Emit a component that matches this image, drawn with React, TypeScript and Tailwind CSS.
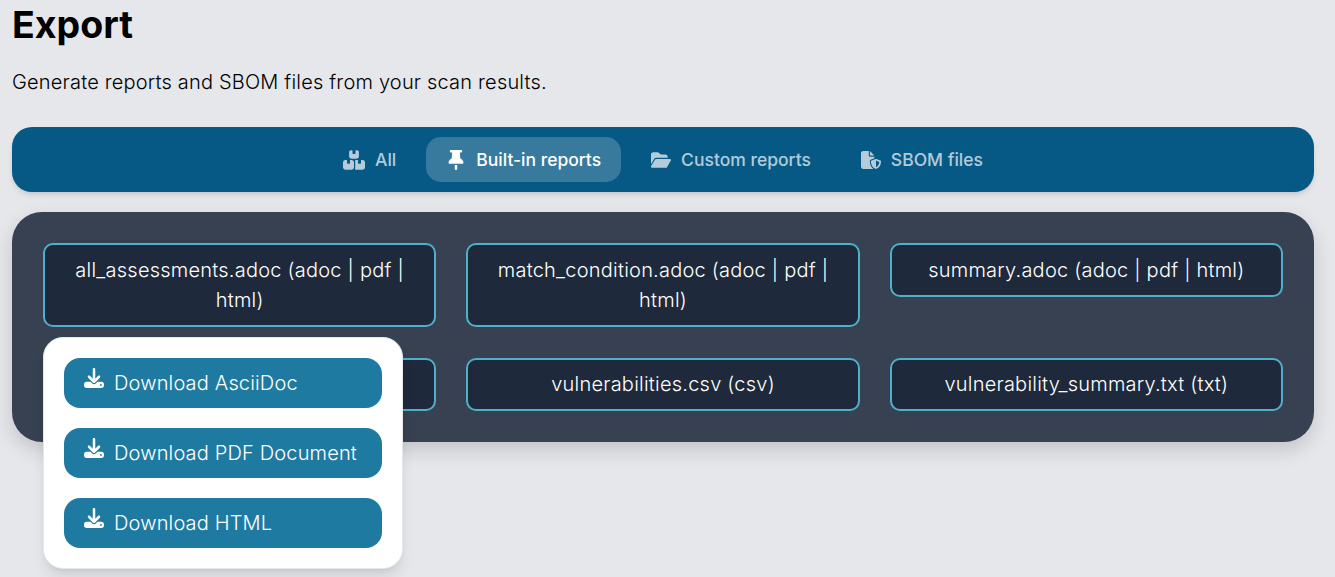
import { FaBoxesStacked, FaThumbtack, FaFolderOpen, FaFileShield, FaDownload } from "react-icons/fa6";

const tabs = [
  { name: "All", icon: FaBoxesStacked, iconClass: "h-5 w-[22px]" },
  { name: "Built-in reports", icon: FaThumbtack, active: true, iconClass: "size-5" },
  { name: "Custom reports", icon: FaFolderOpen, iconClass: "size-5" },
  { name: "SBOM files", icon: FaFileShield, iconClass: "size-5" },
];

// the first report of the second row sits under the open menu, its name can't be read
const reports = [
  "all_assessments.adoc (adoc | pdf | html)",
  "match_condition.adoc (adoc | pdf | html)",
  "summary.adoc (adoc | pdf | html)",
  "\u00a0",
  "vulnerabilities.csv (csv)",
  "vulnerability_summary.txt (txt)",
];

const downloads = ["Download AsciiDoc", "Download PDF Document", "Download HTML"];

export default function App() {
  return (
    <div className="h-[577px] overflow-hidden bg-[#e5e7eb] pl-3 pr-[21px] font-['Inter',sans-serif] text-black antialiased">
      <h1 className="text-[37.5px] font-bold leading-[50px]">Export</h1>
      <p className="mt-[17px] text-[20px] font-[350] leading-[30px] tracking-[0.19px]">Generate reports and SBOM files from your scan results.</p>

      <div className="mt-[30px] flex h-[65px] items-center justify-center gap-[10px] rounded-[20px] bg-[#075985] shadow-md">
        {tabs.map((tab) => (
          <div
            key={tab.name}
            className={
              tab.active
                ? "flex h-[45px] items-center gap-[10px] rounded-[15px] bg-white/20 px-5 text-[17.5px] font-[450] text-white"
                : "flex h-[45px] items-center gap-[10px] rounded-[15px] px-5 text-[17.5px] font-[450] text-white/70"
            }
          >
            <tab.icon className={tab.iconClass} />
            <span className="mt-[2px]">{tab.name}</span>
          </div>
        ))}
      </div>

      <div className="relative mt-5 rounded-[30px] bg-[#374151] p-[31px] shadow-[0_8px_20px_rgba(0,0,0,0.15)]">
        <div className="grid grid-cols-3 items-start gap-x-[30px] gap-y-[31px]">
          {reports.map((r, i) => (
            <div
              key={i}
              className="rounded-[10px] border-2 border-[#4fb0cb] bg-[#1e293b] px-5 py-[9.75px] text-center text-[20px] font-[350] leading-[30px] tracking-[0.23px] text-white"
            >
              {r}
            </div>
          ))}
        </div>

        <div className="absolute left-[31px] top-[125px] flex w-[360px] flex-col gap-5 rounded-[20px] border border-gray-200 bg-white p-5 shadow-lg">
          {downloads.map((d) => (
            <div key={d} className="flex h-[50px] items-center gap-[10px] rounded-2xl bg-[#1f7aa1] px-5 text-[20px] font-[350] tracking-[0.16px] text-white">
              <FaDownload className="mb-[10px] size-5" />
              {d}
            </div>
          ))}
        </div>
      </div>
    </div>
  );
}
